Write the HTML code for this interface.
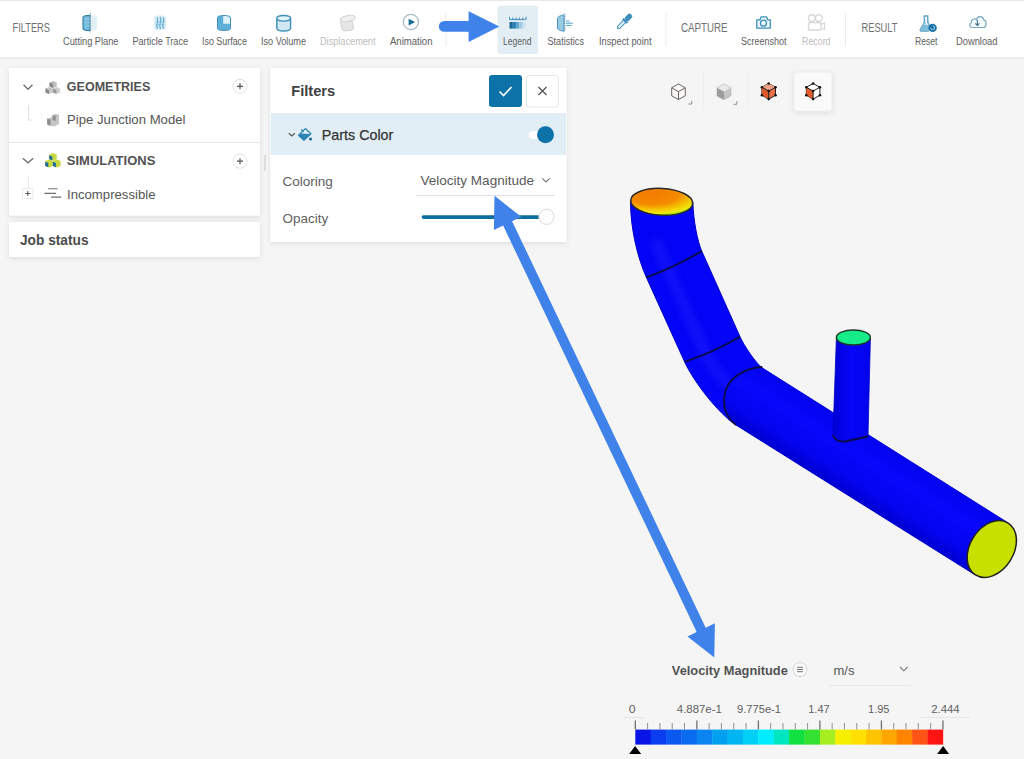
<!DOCTYPE html>
<html><head><meta charset="utf-8">
<style>
html,body{margin:0;padding:0;width:1024px;height:759px;overflow:hidden;background:#f5f5f5;}
svg{display:block;font-family:"Liberation Sans",sans-serif;}
.tb{font-size:10px;fill:#5e5e5e;}
.dis{fill:#bdbdbd;}
.sec{font-size:12px;fill:#707070;}
</style></head>
<body>
<svg width="1024" height="759" viewBox="0 0 1024 759">
<defs>
  <linearGradient id="pipeA" x1="0" y1="0" x2="1" y2="0">
    <stop offset="0" stop-color="#0000d8"/>
    <stop offset="0.55" stop-color="#1a22ff"/>
    <stop offset="1" stop-color="#0000e6"/>
  </linearGradient>
</defs>
<!-- background -->
<rect x="0" y="0" width="1024" height="759" fill="#f5f5f5"/>
<!-- toolbar -->
<rect x="0" y="0" width="1024" height="1" fill="#e8e8e8"/>
<rect x="0" y="1" width="1024" height="56" fill="#ffffff"/>
<rect x="0" y="57" width="1024" height="2" fill="#ebebeb"/>

<!-- toolbar separators -->
<rect x="445.5" y="13" width="1" height="33" fill="#ececec"/>
<rect x="665.5" y="13" width="1" height="33" fill="#ececec"/>
<rect x="845" y="13" width="1" height="33" fill="#ececec"/>

<!-- legend highlight -->
<rect x="497.5" y="5.5" width="40.5" height="48.5" rx="3" fill="#e2edf4"/>

<!-- toolbar labels -->
<text class="sec" x="12.5" y="32" textLength="37.5" lengthAdjust="spacingAndGlyphs">FILTERS</text>
<text class="tb" x="63" y="44.5" textLength="55.5" lengthAdjust="spacingAndGlyphs">Cutting Plane</text>
<text class="tb" x="132.5" y="44.5" textLength="55.5" lengthAdjust="spacingAndGlyphs">Particle Trace</text>
<text class="tb" x="202" y="44.5" textLength="45" lengthAdjust="spacingAndGlyphs">Iso Surface</text>
<text class="tb" x="261" y="44.5" textLength="45" lengthAdjust="spacingAndGlyphs">Iso Volume</text>
<text class="tb dis" x="320" y="44.5" textLength="55.5" lengthAdjust="spacingAndGlyphs">Displacement</text>
<text class="tb" x="390" y="44.5" textLength="42.5" lengthAdjust="spacingAndGlyphs">Animation</text>
<text class="tb" x="503" y="44.5" textLength="28.5" lengthAdjust="spacingAndGlyphs">Legend</text>
<text class="tb" x="547.5" y="44.5" textLength="36.5" lengthAdjust="spacingAndGlyphs">Statistics</text>
<text class="tb" x="599" y="44.5" textLength="52.5" lengthAdjust="spacingAndGlyphs">Inspect point</text>
<text class="sec" x="681" y="32" textLength="46.5" lengthAdjust="spacingAndGlyphs">CAPTURE</text>
<text class="tb" x="741" y="44.5" textLength="45.5" lengthAdjust="spacingAndGlyphs">Screenshot</text>
<text class="tb dis" x="802" y="44.5" textLength="28.5" lengthAdjust="spacingAndGlyphs">Record</text>
<text class="sec" x="861.5" y="32" textLength="36" lengthAdjust="spacingAndGlyphs">RESULT</text>
<text class="tb" x="915" y="44.5" textLength="22.5" lengthAdjust="spacingAndGlyphs">Reset</text>
<text class="tb" x="956" y="44.5" textLength="41.5" lengthAdjust="spacingAndGlyphs">Download</text>

<!-- ICONS placeholder -->
<g id="icons">
<!-- cutting plane -->
<path d="M90,15.2 C86,15.2 83,16.2 83,17.5 V28.3 C83,29.6 86,30.6 90,30.6 Z" fill="#74bbdd" stroke="#2f7fa6" stroke-width="1.1"/>
<path d="M85,19.5 Q87.5,18.3 90,19 M85,23 Q87.5,22 90,22.5 M85,26.5 Q87.5,25.5 90,26" stroke="#9fd3ea" stroke-width="0.9" fill="none"/>
<path d="M90.6,15.2 C94,15.2 97,16.2 97,17.5 V28.3 C97,29.6 94,30.6 90.6,30.6 Z" fill="#e0f0f7"/>
<path d="M90.4,13 V32.5" stroke="#6f8f9f" stroke-width="1" stroke-dasharray="1.3,1.1"/>
<!-- particle trace -->
<rect x="153.8" y="15.5" width="12.4" height="14.5" rx="3" fill="#d8edf7"/>
<path d="M157,17.5 Q158.5,20.2 157.2,23 Q156,25.8 157.6,28.5 M160,17 Q161.6,20 160.2,23 Q159,26 160.6,29 M163,17.5 Q164.6,20.2 163.2,23 Q162,25.8 163.6,28.5" stroke="#5aa8d0" stroke-width="1.2" fill="none"/>
<path d="M156,22 H164.5 M156,24.6 H164.5" stroke="#7dbcdc" stroke-width="0.8"/>
<!-- iso surface -->
<path d="M217.5,17.5 C217.5,16.2 220.5,15.5 224,15.5 C227.5,15.5 230.5,16.2 230.5,17.5 V28.5 C230.5,29.8 227.5,30.5 224,30.5 C220.5,30.5 217.5,29.8 217.5,28.5 Z" fill="#5eb0d8" stroke="#3a88b0" stroke-width="0.9"/>
<path d="M223.2,15.9 C226.5,15.9 230,16.5 230,17.6 V23.8 H223.2 Z" fill="#ddf0f8"/>
<!-- iso volume -->
<path d="M276.8,18.5 V28 C276.8,29.8 280,31 283.7,31 C287.4,31 290.6,29.8 290.6,28 V18.5" fill="#cfe8f4" stroke="#3b8fb9" stroke-width="1.4"/>
<ellipse cx="283.7" cy="18.3" rx="6.9" ry="2.8" fill="#e7f4fa" stroke="#3b8fb9" stroke-width="1.4"/>
<!-- displacement -->
<path d="M340,19 L342,29 C342.5,30.5 346,31 349,30.5 C352,30 354,29 353.5,27.5 L351.5,18" fill="#e6e6e6" stroke="#d6d6d6" stroke-width="1.2"/>
<ellipse cx="348" cy="18.5" rx="7.5" ry="3" transform="rotate(-10 348 18.5)" fill="#f0f0f0" stroke="#d6d6d6" stroke-width="1.2"/>
<!-- animation -->
<circle cx="410.9" cy="22" r="7.6" fill="none" stroke="#a9bac4" stroke-width="1.3"/>
<path d="M408.6,18.7 L415.2,22.1 L408.6,25.5 Z" fill="#1b6f96"/>
<!-- legend -->
<path d="M509.5,19.6 H526 M509.5,16.8 V19.6 M512.8,17.5 V19.6 M516.1,17.5 V19.6 M519.4,17.5 V19.6 M522.7,17.5 V19.6 M526,16.8 V19.6" stroke="#3f8fbb" stroke-width="1" fill="none"/>
<rect x="509.5" y="22" width="3.3" height="6.6" fill="#1d6a98"/>
<rect x="512.8" y="22" width="3.3" height="6.6" fill="#2f84b5"/>
<rect x="516.1" y="22" width="3.3" height="6.6" fill="#62a9cf"/>
<rect x="519.4" y="22" width="3.3" height="6.6" fill="#9ccbe3"/>
<rect x="522.7" y="22" width="3.3" height="6.6" fill="#cfe6f1"/>
<!-- statistics -->
<path d="M564,15 C560,15.5 557.5,17 557.5,18.5 V28 C557.5,29.5 560,30.8 564,31.2 Z" fill="#9bcbe3" stroke="#3f8fbb" stroke-width="1"/>
<path d="M564.8,13.5 V32" stroke="#5d8ba3" stroke-width="1" stroke-dasharray="1.2,1.1"/>
<path d="M566,21 H569.5 M566,23.2 H573 M566,25.4 H571.5" stroke="#4b9fc9" stroke-width="1"/>
<!-- inspect point -->
<g transform="translate(617.6,28.4) rotate(-45)">
<path d="M0,0 L1.8,-1.6 H10 V1.6 H1.8 Z" fill="#d9eef7" stroke="#3f8fbb" stroke-width="1" stroke-linejoin="round"/>
<rect x="9.6" y="-3.2" width="2" height="6.4" fill="#3f8fbb"/>
<rect x="11.2" y="-2.7" width="8.3" height="5.4" rx="2.6" fill="#3f8fbb"/>
</g>
<!-- camera -->
<path d="M756.8,19.8 H760 L761.2,16.8 H766.5 L767.7,19.8 H770.3 V28.2 H756.8 Z" fill="#eef8fc" stroke="#3c8fba" stroke-width="1.3" stroke-linejoin="round"/>
<circle cx="763.5" cy="23.2" r="3" fill="none" stroke="#3c8fba" stroke-width="1.3"/>
<!-- record -->
<circle cx="811.8" cy="18" r="3.3" fill="none" stroke="#d8d8d8" stroke-width="1.4"/>
<circle cx="818.8" cy="18" r="3.3" fill="none" stroke="#d8d8d8" stroke-width="1.4"/>
<rect x="808.5" y="22.5" width="12.5" height="7.5" rx="1" fill="none" stroke="#d8d8d8" stroke-width="1.4"/>
<path d="M821,24.5 L824.5,22.8 V29.5 L821,28" fill="none" stroke="#d8d8d8" stroke-width="1.3"/>
<!-- reset flask -->
<path d="M923.5,16 H928.5 M924.3,16 V22.5 L920.3,29.5 C919.8,30.5 920.3,31 921.3,31 H929 M927.7,16 V22.5 L930.5,27" fill="#bfe0ef" stroke="#5aa3c6" stroke-width="1.3" stroke-linejoin="round"/>
<path d="M921,29.5 L923.5,25 H929 L930,27.5 L929,31 H921.3 Z" fill="#7fbcd8"/>
<circle cx="932.6" cy="27.9" r="4.2" fill="#1a6fa4"/>
<path d="M930.8,27.6 A1.9,1.9 0 1 0 932.8,25.9" stroke="#9fd6ef" stroke-width="1" fill="none"/>
<!-- download cloud -->
<path d="M972,27.5 C969.5,27.5 968.8,24 971.2,23 C970.8,19.5 974.5,17.8 976.5,19.5 C977.5,15.5 983,15.5 983.8,19.8 C986.5,20 987,25.5 984.5,27.5 Z" fill="#f3fafd" stroke="#7aaabd" stroke-width="1.2" stroke-linejoin="round"/>
<path d="M977.3,20 V25.3 M975.3,23.3 L977.3,25.5 L979.3,23.3" stroke="#3d6f86" stroke-width="1.1" fill="none"/>
</g>
<!-- left panel -->
<defs><filter id="sh" x="-10%" y="-20%" width="120%" height="150%"><feDropShadow dx="0" dy="1.5" stdDeviation="2.5" flood-color="#000" flood-opacity="0.10"/></filter></defs>
<rect x="9" y="68" width="251" height="147.5" fill="#ffffff" filter="url(#sh)"/>
<rect x="9" y="142" width="251" height="1" fill="#e8e8e8"/>
<rect x="9" y="222" width="251" height="35" fill="#ffffff" filter="url(#sh)"/>

<!-- filters panel -->
<rect x="270.5" y="68" width="296" height="174" fill="#ffffff" filter="url(#sh)"/>
<rect x="271" y="113" width="295" height="42" fill="#e1eef6"/>

<rect x="703" y="73" width="1" height="36" fill="#efefef"/>
<rect x="748" y="73" width="1" height="36" fill="#efefef"/>
<!-- view cube box -->
<rect x="793.8" y="72" width="38.4" height="39" rx="3" fill="#fafafa" stroke="#e6ebef" stroke-width="1" filter="url(#sh)"/>

<!-- panel icons -->
<g id="panelicons">
<!-- geometries cubes -->
<path d="M49.5,82.5 L53,81 L56.7,82.5 V86.5 L53,88 L49.5,86.5 Z" fill="#bdbdbd"/>
<path d="M49.5,82.5 L53,84 V88 L49.5,86.5 Z" fill="#8a8a8a"/>
<path d="M45.5,88.5 L49,87 L52.8,88.5 V92.5 L49,94 L45.5,92.5 Z" fill="#c8c8c8"/>
<path d="M45.5,88.5 L49,90 V94 L45.5,92.5 Z" fill="#8a8a8a"/>
<path d="M52.8,88.5 L56.4,87 L60,88.5 V92.5 L56.4,94 L52.8,92.5 Z" fill="#d0d0d0"/>
<path d="M52.8,88.5 L56.4,90 V94 L52.8,92.5 Z" fill="#9a9a9a"/>
<!-- pipe model icon -->
<path d="M52.5,115 L55.8,113.8 L59,115 V124 L54,126.5 L47.2,124.5 V118.5 L52.5,117 Z" fill="#c4c4c4"/>
<path d="M47.2,118.5 L50.5,119.7 V126 L47.2,124.5 Z" fill="#8c8c8c"/>
<path d="M52.5,115 L55.8,116.2 V121 L52.5,120 Z" fill="#909090"/>
<!-- simulations cubes -->
<path d="M49.2,154.5 L53,153 L56.7,154.5 V159.3 L53,160.8 L49.2,159.3 Z" fill="#c9d83e"/>
<path d="M49.2,155.2 L52.3,156.5 V160.5 L49.2,159.3 Z" fill="#1c6aa0"/>
<path d="M45.2,161 L49,159.6 L52.8,161 V166 L49,167.6 L45.2,166 Z" fill="#c9d83e"/>
<path d="M45.2,161.8 L48.3,163 V167.2 L45.2,166 Z" fill="#1c6aa0"/>
<path d="M52.8,161 L56.7,159.6 L60.6,161 V166 L56.7,167.6 L52.8,166 Z" fill="#c9d83e"/>
<path d="M52.8,161.8 L55.9,163 V167.2 L52.8,166 Z" fill="#1c6aa0"/>
<!-- paint bucket -->
<path d="M298.6,135.3 L305.3,128.6 L310.9,133.8 L303.9,140.3 Z" fill="none" stroke="#2f86b6" stroke-width="1.3" stroke-linejoin="round"/>
<path d="M298.6,135.3 L301.5,133.5 L308.5,134 L310.9,133.8 L303.9,140.3 Z" fill="#2a85b5"/>
<path d="M301.3,129.3 L303.5,132" stroke="#2f86b6" stroke-width="1.2"/>
<circle cx="310.6" cy="139" r="1.6" fill="#1f6f98"/>
<!-- view cubes -->
<g stroke="#666" stroke-width="1" fill="#fbf8f6">
<path d="M678.5,84 L685.3,87.8 V95.8 L678.5,99.5 L671.7,95.8 V87.8 Z"/>
<path d="M671.7,87.8 L678.5,91.6 L685.3,87.8 M678.5,91.6 V99.5" fill="none"/>
</g>
<path d="M688.5,104 H691.8 V100.8" stroke="#888" stroke-width="0.9" fill="none"/>
<path d="M724,84 L730.8,87.8 V95.8 L724,99.5 L717.2,95.8 V87.8 Z" fill="#d6d6d6" stroke="#9a9a9a" stroke-width="0.8"/>
<path d="M717.2,87.8 L724,91.6 V99.5 L717.2,95.8 Z" fill="#9c9c9c"/>
<path d="M724,91.6 L730.8,87.8 V95.8 L724,99.5 Z" fill="#c4c4c4"/>
<path d="M724,84 L730.8,87.8 L724,91.6 L717.2,87.8 Z" fill="#e8e8e8"/>
<path d="M733.5,104.3 H736.8 V101" stroke="#888" stroke-width="0.9" fill="none"/>
<g>
<path d="M768.7,83.5 L775.5,87.3 V95.3 L768.7,99.1 L761.9,95.3 V87.3 Z" fill="#e9714a" stroke="#222" stroke-width="1"/>
<path d="M768.7,83.5 L775.5,87.3 L768.7,91.1 L761.9,87.3 Z" fill="#f1a286"/>
<path d="M761.9,87.3 L768.7,91.1 V99.1 L761.9,95.3 Z" fill="#de5a2d"/>
<path d="M761.9,87.3 L768.7,91.1 L775.5,87.3 M768.7,91.1 V99.1" stroke="#222" stroke-width="1" fill="none"/>
<g fill="#111"><circle cx="768.7" cy="83.5" r="1.3"/><circle cx="775.5" cy="87.3" r="1.3"/><circle cx="775.5" cy="95.3" r="1.3"/><circle cx="768.7" cy="99.1" r="1.3"/><circle cx="761.9" cy="95.3" r="1.3"/><circle cx="761.9" cy="87.3" r="1.3"/><circle cx="768.7" cy="91.1" r="1.3"/></g>
</g>
<g>
<path d="M813.1,83.5 L819.9,87.3 V95.3 L813.1,99.1 L806.3,95.3 V87.3 Z" fill="#fff" stroke="#222" stroke-width="1"/>
<path d="M806.3,87.3 L813.1,91.1 V99.1 L806.3,95.3 Z" fill="#e35c2c"/>
<path d="M806.3,87.3 L813.1,91.1 L819.9,87.3 M813.1,91.1 V99.1" stroke="#222" stroke-width="1" fill="none"/>
<g fill="#111"><circle cx="813.1" cy="83.5" r="1.3"/><circle cx="819.9" cy="87.3" r="1.3"/><circle cx="819.9" cy="95.3" r="1.3"/><circle cx="813.1" cy="99.1" r="1.3"/><circle cx="806.3" cy="95.3" r="1.3"/><circle cx="806.3" cy="87.3" r="1.3"/><circle cx="813.1" cy="91.1" r="1.3"/></g>
</g>
</g>

<!-- left panel content -->
<g id="leftpanel">
<path d="M23.5,84.8 L28,89.3 L32.5,84.8" stroke="#707070" stroke-width="1.3" fill="none"/>
<text x="66.8" y="90.8" font-size="12.3" font-weight="700" fill="#525252" textLength="83.5" lengthAdjust="spacingAndGlyphs">GEOMETRIES</text>
<circle cx="240" cy="86.3" r="7" fill="#fff" stroke="#e0e0e0" stroke-width="1"/>
<path d="M237,86.3 H243 M240,83.3 V89.3" stroke="#555" stroke-width="1.2"/>
<path d="M28.5,105 V120 H32" stroke="#e0e0e0" stroke-width="1" fill="none"/>
<text x="67" y="123.8" font-size="13" fill="#555" textLength="118.5" lengthAdjust="spacingAndGlyphs">Pipe Junction Model</text>
<path d="M22.8,158.2 L28,162.8 L33.2,158.2" stroke="#707070" stroke-width="1.3" fill="none"/>
<text x="66.8" y="165" font-size="12.3" font-weight="700" fill="#525252" textLength="88.5" lengthAdjust="spacingAndGlyphs">SIMULATIONS</text>
<circle cx="240" cy="161.2" r="7" fill="#fff" stroke="#e0e0e0" stroke-width="1"/>
<path d="M237,161.2 H243 M240,158.2 V164.2" stroke="#555" stroke-width="1.2"/>
<path d="M28.5,176 V188" stroke="#ececec" stroke-width="1" fill="none"/>
<rect x="22.5" y="188.5" width="10.5" height="10" fill="#fff" stroke="#ebebeb" stroke-width="1"/>
<path d="M25.3,193.5 H30.3 M27.8,191 V196" stroke="#555" stroke-width="1"/>
<path d="M48.2,188.8 H57.5 M44.5,193.4 H56 M51,197.1 H61.2" stroke="#6e6e6e" stroke-width="1.1" fill="none"/>
<text x="67" y="198.5" font-size="13" fill="#555" textLength="88.5" lengthAdjust="spacingAndGlyphs">Incompressible</text>
<text x="20" y="245.4" font-size="15" font-weight="700" fill="#4a4a4a" textLength="68.5" lengthAdjust="spacingAndGlyphs">Job status</text>
<rect x="264" y="155" width="2" height="16" fill="#dedede"/>
</g>
<!-- filters panel content -->
<g id="filterspanel">
<text x="291.2" y="96.2" font-size="15" font-weight="700" fill="#404040" textLength="44" lengthAdjust="spacingAndGlyphs">Filters</text>
<rect x="489" y="75" width="33" height="32" rx="3" fill="#0d72a8"/>
<path d="M499.5,91.5 L503.5,95.5 L511.5,87" stroke="#fff" stroke-width="1.6" fill="none"/>
<rect x="526.5" y="75.5" width="32" height="31.5" rx="3" fill="#fff" stroke="#e6e6e6" stroke-width="1"/>
<path d="M538.5,87 L546.5,95 M546.5,87 L538.5,95" stroke="#555" stroke-width="1.3"/>
<path d="M288.8,133.2 L291.8,136 L294.8,133.2" stroke="#555" stroke-width="1.2" fill="none"/>
<text x="321.8" y="139.6" font-size="15" fill="#333" stroke="#333" stroke-width="0.25" textLength="71.5" lengthAdjust="spacingAndGlyphs">Parts Color</text>
<rect x="529" y="131" width="16" height="8" rx="4" fill="#ffffff"/>
<circle cx="545.5" cy="134.8" r="8.5" fill="#0d72a8"/>
<text x="282.6" y="186" font-size="13" fill="#606060" textLength="50.3" lengthAdjust="spacingAndGlyphs">Coloring</text>
<text x="420.5" y="184.9" font-size="13" fill="#5a5a5a" textLength="113.5" lengthAdjust="spacingAndGlyphs">Velocity Magnitude</text>
<path d="M542.2,178.3 L546,182 L549.8,178.3" stroke="#777" stroke-width="1.1" fill="none"/>
<rect x="416" y="195" width="139" height="1" fill="#e2e2e2"/>
<text x="282.6" y="223" font-size="13" fill="#606060" textLength="45.5" lengthAdjust="spacingAndGlyphs">Opacity</text>
<rect x="421.6" y="215.3" width="118" height="3.6" rx="1.8" fill="#0d6fa0"/>
<circle cx="546.5" cy="216.8" r="7.6" fill="#fff" stroke="#d8d8d8" stroke-width="1"/>
</g>
<!-- legend texts -->
<g id="legendtext">
<text x="671.8" y="674.6" font-size="13" font-weight="700" fill="#525252" textLength="116" lengthAdjust="spacingAndGlyphs">Velocity Magnitude</text>
<circle cx="800" cy="669.5" r="7" fill="#fafafa" stroke="#d4d4d4" stroke-width="1"/>
<path d="M797,667.3 H803 M797,669.5 H803 M797,671.7 H803" stroke="#666" stroke-width="0.9"/>
<text x="833.5" y="674.6" font-size="13" fill="#555" textLength="21" lengthAdjust="spacingAndGlyphs">m/s</text>
<path d="M900,667 L903.8,670.8 L907.6,667" stroke="#777" stroke-width="1.1" fill="none"/>
<rect x="829" y="685" width="82" height="1" fill="#e6e6e6"/>
<text x="628.8" y="712.6" font-size="10.5" fill="#606060" textLength="6.8" lengthAdjust="spacingAndGlyphs">0</text>
<text x="676.8" y="712.6" font-size="10.5" fill="#606060" textLength="45" lengthAdjust="spacingAndGlyphs">4.887e-1</text>
<text x="737" y="712.6" font-size="10.5" fill="#606060" textLength="44" lengthAdjust="spacingAndGlyphs">9.775e-1</text>
<text x="808.2" y="712.6" font-size="10.5" fill="#606060" textLength="21.5" lengthAdjust="spacingAndGlyphs">1.47</text>
<text x="868" y="712.6" font-size="10.5" fill="#606060" textLength="21.5" lengthAdjust="spacingAndGlyphs">1.95</text>
<text x="931.2" y="712.6" font-size="10.5" fill="#606060" textLength="28.5" lengthAdjust="spacingAndGlyphs">2.444</text>
<rect x="624" y="717" width="20" height="1" fill="#e6e6e6"/>
<rect x="920" y="717" width="50" height="1" fill="#e6e6e6"/>
<path d="M629.1,754 L635.1,746 L641.1,754 Z" fill="#000"/>
<path d="M937.1,754 L943.1,746 L949.1,754 Z" fill="#000"/>
</g>
<!-- pipe -->
<g id="pipe">
<defs>
<radialGradient id="capg" cx="0.3" cy="0.1" r="0.95" fx="0.3" fy="0.2">
<stop offset="0" stop-color="#f27a00"/>
<stop offset="0.5" stop-color="#f58a00"/>
<stop offset="0.72" stop-color="#f4c400"/>
<stop offset="0.88" stop-color="#f2e810"/>
<stop offset="1" stop-color="#70e020"/>
</radialGradient>
<filter id="blur3" x="-50%" y="-50%" width="200%" height="200%"><feGaussianBlur stdDeviation="4"/></filter>
</defs>
<path d="M630.5,201.6 C630.5,230 638.2,259.2 646.4,277.4 L684.6,361.8 C693.6,381.8 719.1,414.3 736,425 L975.4,575 L1008.2,523 L762.3,368 C755.5,362.7 744.1,345.8 740,336.7 L701.7,251 C697.6,241.5 693.5,222 692.8,201.6 Z" fill="#0404f6" stroke="#0000c8" stroke-width="1"/>
<path d="M655,240 L668,270 L705,352 C712,368 722,380 735,390" stroke="#2c2cff" stroke-width="9" fill="none" opacity="0.45" filter="url(#blur3)"/>
<linearGradient id="strg" gradientUnits="userSpaceOnUse" x1="1008.2" y1="523" x2="975.4" y2="575"><stop offset="0" stop-color="#0303ee"/><stop offset="0.35" stop-color="#0808fc"/><stop offset="0.75" stop-color="#0404f0"/><stop offset="1" stop-color="#0000d2"/></linearGradient>
<path d="M762.3,368 L1008.2,523 L975.4,575 L736,425 C727,418 722.5,408 724.5,395 C727,378 745,368 762.3,367 Z" fill="url(#strg)"/>
<ellipse cx="991.8" cy="549" rx="30.7" ry="21.8" transform="rotate(122.2 991.8 549)" fill="#c8e000" stroke="#202020" stroke-width="1.5"/>
<path d="M646.4,277.4 Q675.2,267 701.7,251" stroke="#0c0c40" stroke-width="1.8" fill="none"/>
<path d="M684.6,361.8 Q713.5,352.2 740,336.7" stroke="#0c0c40" stroke-width="1.8" fill="none"/>
<path d="M762.3,367 C745,368 727,378 724.5,395 C722.5,408 727,418 736,425" stroke="#0c0c40" stroke-width="1.8" fill="none"/>
<ellipse cx="661.7" cy="201.8" rx="31" ry="13.4" transform="rotate(3 661.7 201.8)" fill="url(#capg)" stroke="#2a2a2a" stroke-width="1.5"/>
<linearGradient id="brg" x1="0" y1="0" x2="1" y2="0"><stop offset="0" stop-color="#0000d6"/><stop offset="0.5" stop-color="#0606f8"/><stop offset="1" stop-color="#0303ec"/></linearGradient>
<path d="M836.4,337.5 L833,435 Q835,442 845,441.5 L868,436.5 L870.4,337.5 Z" fill="url(#brg)" stroke="#0000c0" stroke-width="0.8"/>
<path d="M833,435 Q835,442 845,441.5 L868,436.5" stroke="#0c0c40" stroke-width="1.8" fill="none"/>
<ellipse cx="853.4" cy="337.5" rx="17" ry="7.5" fill="#16ec88" stroke="#1c3a2a" stroke-width="1.4"/>
</g>
<!-- legend bar -->
<g id="legendbar">
<rect x="635.30" y="729.6" width="15.68" height="15" fill="#0a14e6"/>
<rect x="650.68" y="729.6" width="15.68" height="15" fill="#0a3cf0"/>
<rect x="666.06" y="729.6" width="15.68" height="15" fill="#0a58f0"/>
<rect x="681.44" y="729.6" width="15.68" height="15" fill="#0a6cf0"/>
<rect x="696.82" y="729.6" width="15.68" height="15" fill="#0a84f0"/>
<rect x="712.20" y="729.6" width="15.68" height="15" fill="#00a0f0"/>
<rect x="727.58" y="729.6" width="15.68" height="15" fill="#00b6f2"/>
<rect x="742.96" y="729.6" width="15.68" height="15" fill="#00d0f6"/>
<rect x="758.34" y="729.6" width="15.68" height="15" fill="#00eeff"/>
<rect x="773.72" y="729.6" width="15.68" height="15" fill="#00e6c0"/>
<rect x="789.10" y="729.6" width="15.68" height="15" fill="#10e040"/>
<rect x="804.48" y="729.6" width="15.68" height="15" fill="#34e030"/>
<rect x="819.86" y="729.6" width="15.68" height="15" fill="#a6ee20"/>
<rect x="835.24" y="729.6" width="15.68" height="15" fill="#f6f000"/>
<rect x="850.62" y="729.6" width="15.68" height="15" fill="#ffe000"/>
<rect x="866.00" y="729.6" width="15.68" height="15" fill="#ffc400"/>
<rect x="881.38" y="729.6" width="15.68" height="15" fill="#ffa600"/>
<rect x="896.76" y="729.6" width="15.68" height="15" fill="#ff8400"/>
<rect x="912.14" y="729.6" width="15.68" height="15" fill="#ff5414"/>
<rect x="927.52" y="729.6" width="15.68" height="15" fill="#ff1414"/>
<rect x="634.70" y="720.5" width="1.3" height="9" fill="#707070"/>
<rect x="647.10" y="723" width="1" height="6.5" fill="#909090"/>
<rect x="659.41" y="723" width="1" height="6.5" fill="#909090"/>
<rect x="671.71" y="723" width="1" height="6.5" fill="#909090"/>
<rect x="684.02" y="723" width="1" height="6.5" fill="#909090"/>
<rect x="696.22" y="720.5" width="1.3" height="9" fill="#707070"/>
<rect x="708.62" y="723" width="1" height="6.5" fill="#909090"/>
<rect x="720.93" y="723" width="1" height="6.5" fill="#909090"/>
<rect x="733.23" y="723" width="1" height="6.5" fill="#909090"/>
<rect x="745.54" y="723" width="1" height="6.5" fill="#909090"/>
<rect x="757.74" y="720.5" width="1.3" height="9" fill="#707070"/>
<rect x="770.14" y="723" width="1" height="6.5" fill="#909090"/>
<rect x="782.45" y="723" width="1" height="6.5" fill="#909090"/>
<rect x="794.75" y="723" width="1" height="6.5" fill="#909090"/>
<rect x="807.06" y="723" width="1" height="6.5" fill="#909090"/>
<rect x="819.26" y="720.5" width="1.3" height="9" fill="#707070"/>
<rect x="831.66" y="723" width="1" height="6.5" fill="#909090"/>
<rect x="843.97" y="723" width="1" height="6.5" fill="#909090"/>
<rect x="856.27" y="723" width="1" height="6.5" fill="#909090"/>
<rect x="868.58" y="723" width="1" height="6.5" fill="#909090"/>
<rect x="880.78" y="720.5" width="1.3" height="9" fill="#707070"/>
<rect x="893.18" y="723" width="1" height="6.5" fill="#909090"/>
<rect x="905.49" y="723" width="1" height="6.5" fill="#909090"/>
<rect x="917.79" y="723" width="1" height="6.5" fill="#909090"/>
<rect x="930.10" y="723" width="1" height="6.5" fill="#909090"/>
<rect x="942.30" y="720.5" width="1.3" height="9" fill="#707070"/>
</g>
<!-- annotation arrows -->
<g id="arrows" fill="#3f83ea">
<path d="M444.2,21.05 H468.6 V11.2 L499.3,26.4 L468.6,42 V31.75 H444.2 A5.35,5.35 0 0 1 444.2,21.05 Z"/>
<path d="M494.5,195.8 L521.3,216.8 L512.1,221.2 L705.7,627.7 L714.9,623.3 L714.3,657.4 L687.5,636.4 L696.7,632.0 L503.1,225.5 L493.9,229.9 Z"/>
</g>
</svg>
</body></html>
